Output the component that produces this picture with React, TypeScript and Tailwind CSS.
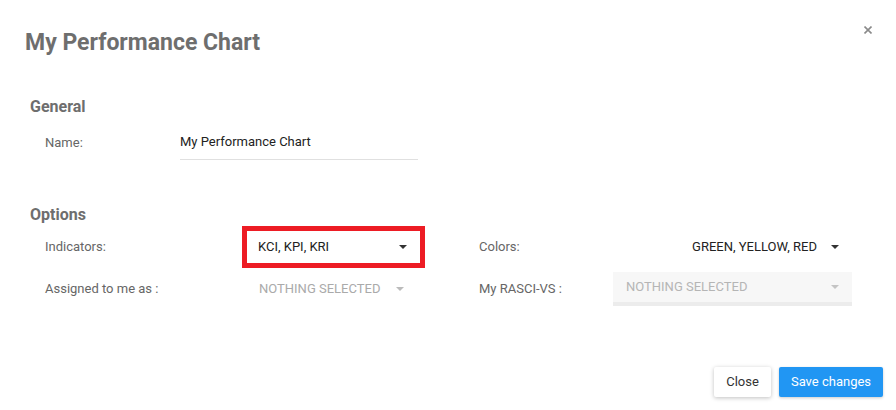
import React from 'react';

const Caret = ({ className }: { className?: string }) => (
  <span className={`inline-block w-0 h-0 border-l-[4px] border-r-[4px] border-t-[4px] border-l-transparent border-r-transparent ${className ?? ''}`} />
);

export default function App() {
  return (
    <div className="relative w-[896px] h-[410px] bg-white flex flex-col font-['Roboto',sans-serif] text-[13px]">
      {/* close icon */}
      <button className="absolute top-[26px] right-[24px] w-[8px] h-[8px] text-[#8a8a8a]">
        <svg viewBox="0 0 8 8" width="8" height="8" stroke="currentColor" strokeWidth="1.6">
          <path d="M0.5 0.5 L7.5 7.5 M7.5 0.5 L0.5 7.5" />
        </svg>
      </button>

      <h1 className="ml-[25px] mt-[29px] text-[23px] leading-[28px] font-bold text-[#6e6e6e]">My Performance Chart</h1>

      {/* General */}
      <h2 className="ml-[30px] mt-[40px] text-[16px] leading-[20px] font-bold text-[#6e6e6e]">General</h2>
      <div className="ml-[45px] mt-[11px] flex items-center h-[32px]">
        <span className="w-[135px] pb-[3px] text-[#666]">Name:</span>
        <div className="w-[238px] h-[32px] pb-[3px] flex items-center border-b border-[#e0e0e0] text-[#222]">My Performance Chart</div>
      </div>

      {/* Options */}
      <h2 className="ml-[30px] mt-[45px] text-[16px] leading-[20px] font-bold text-[#6e6e6e]">Options</h2>
      <div className="ml-[45px] mt-[1px] flex items-center h-[42px]">
        <div className="w-[434px] flex items-center">
          <span className="w-[197px] text-[#666]">Indicators:</span>
          <div className="w-[183px] h-[42px] border-[5px] border-[#ed1c24] flex items-center justify-between pl-[11px] pr-[13px] text-[#222]">
            <span>KCI, KPI, KRI</span>
            <Caret className="border-t-[#333]" />
          </div>
        </div>
        <span className="w-[134px] text-[#666]">Colors:</span>
        <div className="w-[239px] flex items-center justify-end pr-[13px] text-[#222]">
          <span>GREEN, YELLOW, RED</span>
          <Caret className="ml-[14px] border-t-[#333]" />
        </div>
      </div>
      <div className="ml-[45px] mt-[4px] flex items-center h-[34px]">
        <div className="w-[434px] flex items-center">
          <span className="w-[197px] text-[#666]">Assigned to me as :</span>
          <div className="w-[183px] flex items-center justify-between pl-[17px] pr-[21px] text-[#aaa]">
            <span>NOTHING SELECTED</span>
            <Caret className="border-t-[#bbb]" />
          </div>
        </div>
        <span className="w-[134px] text-[#666]">My RASCI-VS :</span>
        <div className="w-[239px] h-[34px] bg-[#f7f7f7] border-b-[4px] border-[#ececec] flex items-center justify-between pl-[13px] pr-[13px] text-[#b5b5b5]">
          <span>NOTHING SELECTED</span>
          <Caret className="border-t-[#c4c4c4]" />
        </div>
      </div>

      {/* footer */}
      <div className="mt-auto mb-[13px] mr-[13px] flex justify-end gap-[8px]">
        <button className="w-[57px] h-[30px] bg-white rounded-[2px] shadow-[0_1px_4px_rgba(0,0,0,0.25)] text-[#333] text-[13px]">Close</button>
        <button className="w-[104px] h-[30px] bg-[#2196f3] rounded-[2px] shadow-[0_1px_3px_rgba(0,0,0,0.2)] text-white text-[13px]">Save changes</button>
      </div>
    </div>
  );
}
